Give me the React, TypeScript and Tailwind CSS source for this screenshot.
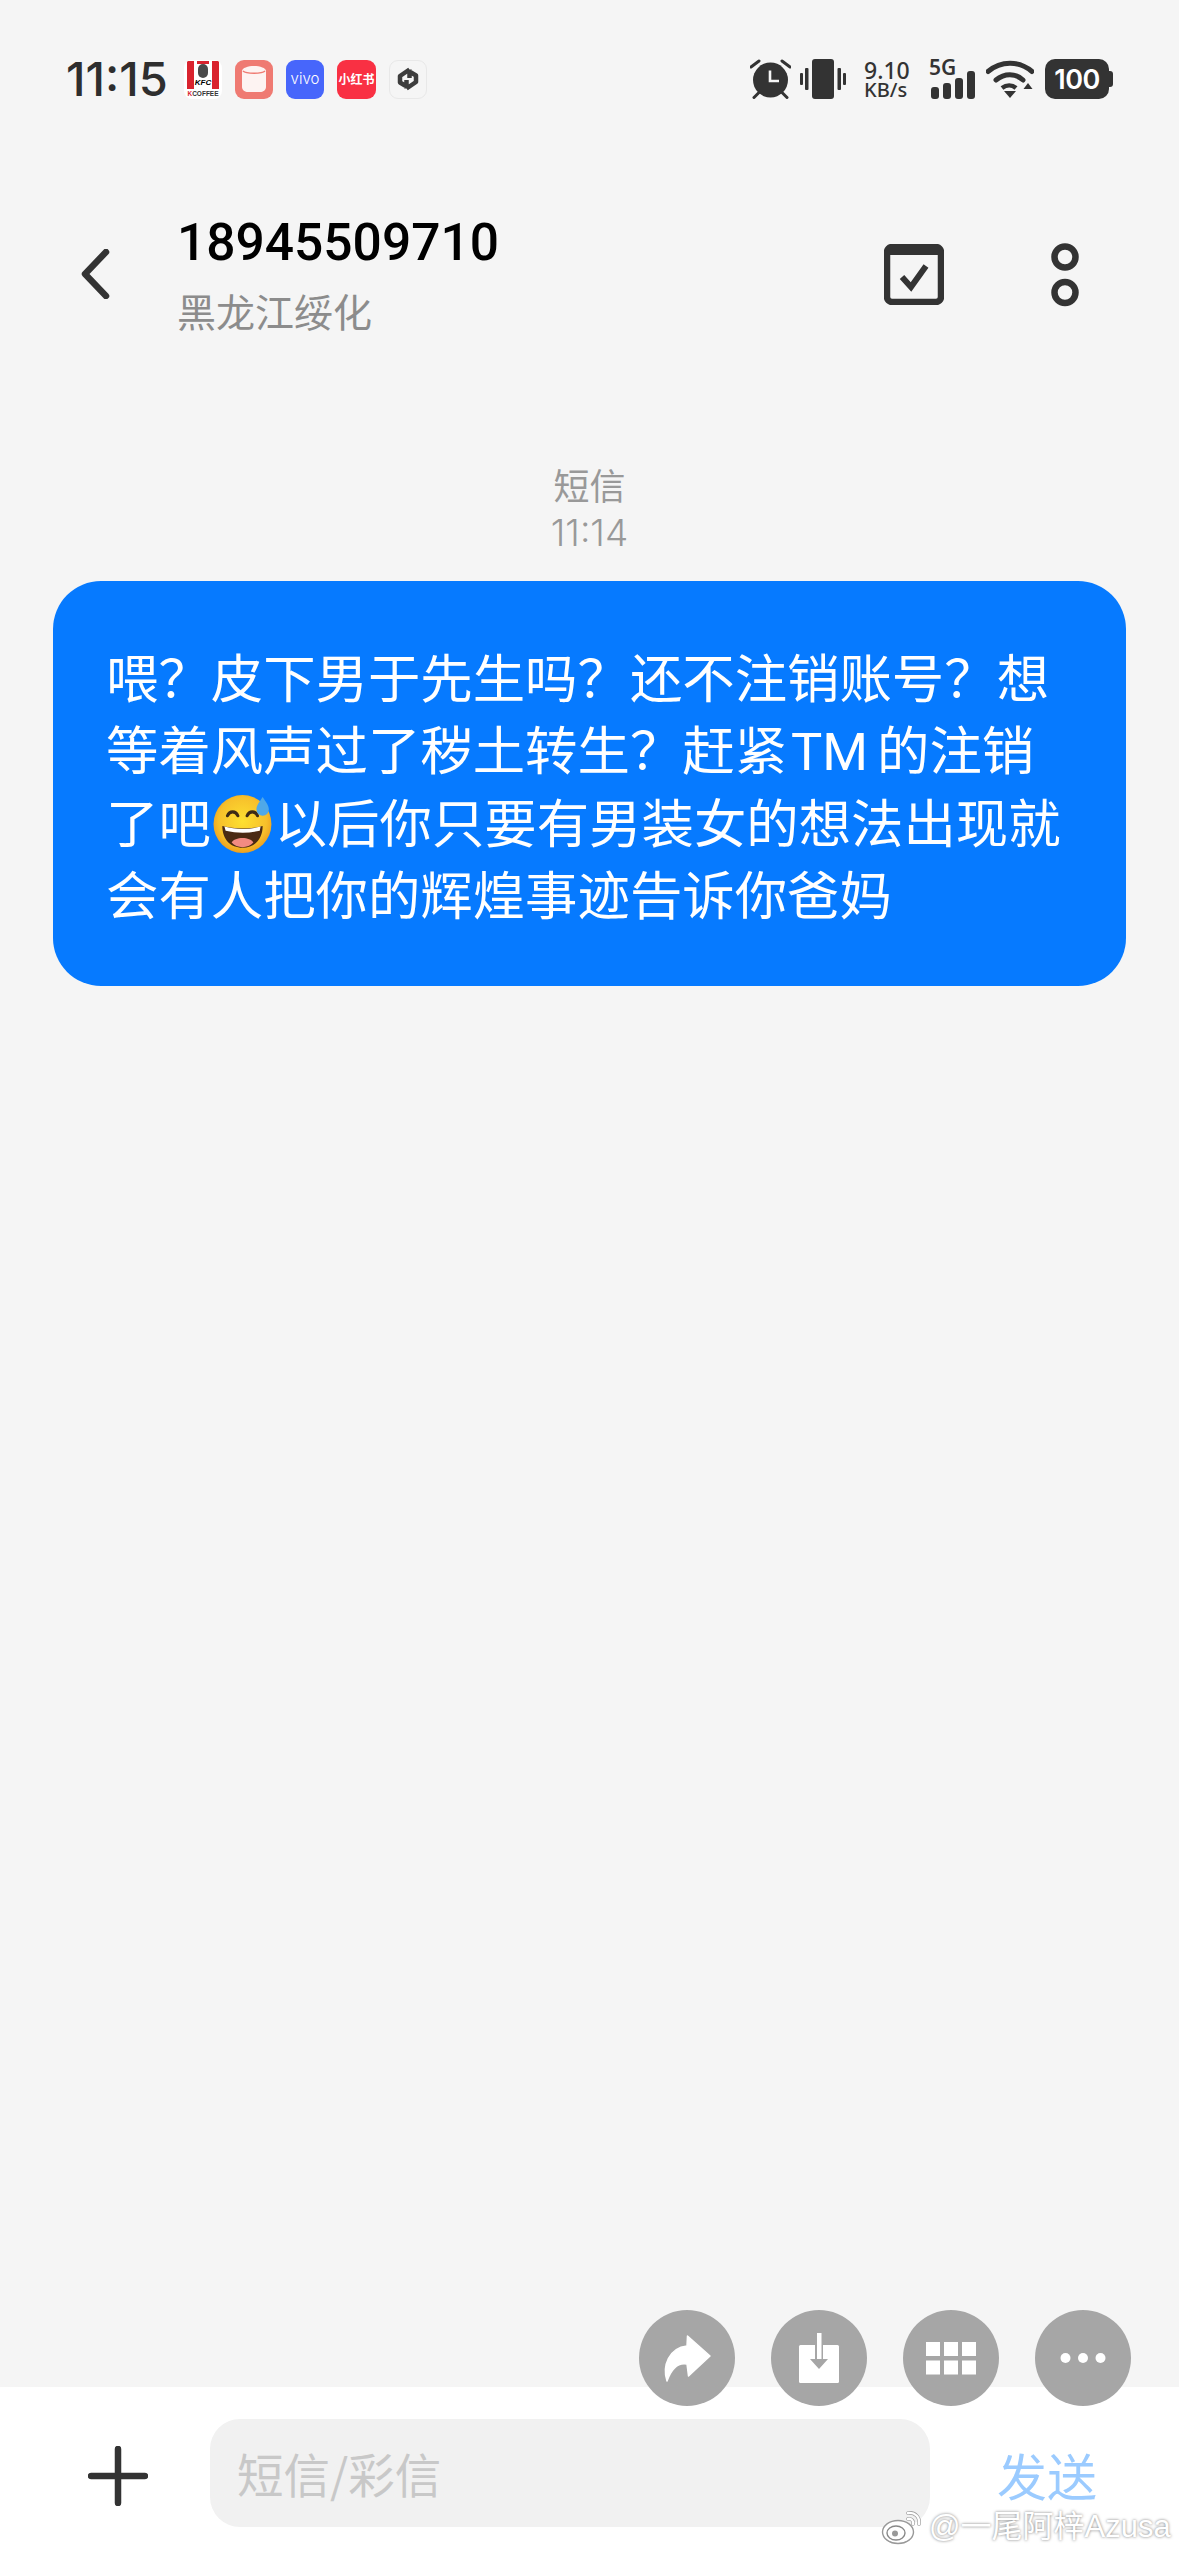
import React from "react";

const cjk = "font-['Noto_Sans_CJK_SC','Noto_Sans',sans-serif]";

function Emoji() {
  return (
    <svg viewBox="0 0 58 56" className="inline-block w-[60px] h-[58px] mx-[2px] -my-[10px] align-baseline">
      <defs>
        <radialGradient id="fc" cx="50%" cy="45%" r="55%">
          <stop offset="0%" stopColor="#fde030" />
          <stop offset="75%" stopColor="#f7c02b" />
          <stop offset="100%" stopColor="#ed9f1f" />
        </radialGradient>
      </defs>
      <circle cx="28.5" cy="28" r="28" fill="url(#fc)" />
      <path d="M14 20c2-5 8-5 10 0M33 20c2-5 8-5 10 0" fill="none" stroke="#3d2a16" strokeWidth="3" strokeLinecap="round" />
      <path d="M9 30c12 3 27 3 39 0c0 13-8 21-19.500 21S9 43 9 30z" fill="#4a2a14" />
      <path d="M11 30.500c11 3 24 3 35 0l-.8 4c-11 2.500-22 2.500-33 0z" fill="#fff" />
      <path d="M18 46c3-6 18-6 21 0c-5 6-16 6-21 0z" fill="#f28b82" />
      <path d="M48 2c3 5 6 8 6 12a6 6 0 0 1-12 0c0-4 3-7 6-12z" fill="#4fa8e8" />
    </svg>
  );
}

function Alarm() {
  return (
    <svg viewBox="0 0 41 40" className="w-[41px] h-[40px] text-[#333]" fill="currentColor">
      <circle cx="20.500" cy="21" r="17.500" />
      <path d="M20 11.500v10.500h9" fill="none" stroke="#f5f5f5" strokeWidth="2.600" />
      <path d="M1 8l8-6M40 8l-8-6M4 38.500l5-5M37 38.500l-5-5" fill="none" stroke="currentColor" strokeWidth="3" strokeLinecap="round" />
    </svg>
  );
}

function Vibrate() {
  return (
    <svg viewBox="0 0 46 40" className="w-[46px] h-[40px] ml-[9px] text-[#333]" fill="currentColor">
      <rect x="12" y="0" width="22" height="40" rx="3" />
      <rect x="0" y="14" width="3" height="12" rx="1" />
      <rect x="5" y="9" width="3.500" height="22" rx="1" />
      <rect x="37.500" y="9" width="3.500" height="22" rx="1" />
      <rect x="43" y="14" width="3" height="12" rx="1" />
    </svg>
  );
}

function Signal() {
  return (
    <svg viewBox="0 0 46 40" className="w-[46px] h-[40px] absolute left-0 top-0 text-[#333]" fill="currentColor">
      <rect x="2" y="28" width="8" height="12" rx="3" />
      <rect x="14" y="24" width="8" height="16" rx="3" />
      <rect x="26" y="19" width="8" height="21" rx="3" />
      <rect x="38" y="12" width="8" height="28" rx="3" />
    </svg>
  );
}

function Wifi() {
  return (
    <svg viewBox="0 0 48 40" className="w-[48px] h-[40px] ml-[11px] text-[#333]">
      <path d="M2 12.500c13-11 31-11 44 0" fill="none" stroke="currentColor" strokeWidth="5" strokeLinecap="round" />
      <path d="M10 21c8.500-7 19.500-7 27 0" fill="none" stroke="currentColor" strokeWidth="5" strokeLinecap="round" />
      <path d="M16 29c4.500-3.500 10-3.500 14 0" fill="none" stroke="currentColor" strokeWidth="4.500" />
      <path d="M18 32h12l-6 7z" fill="currentColor" />
      <path d="M37.500 30l4.500-6 4.500 6z" fill="currentColor" />
    </svg>
  );
}

function Battery() {
  return (
    <div className="ml-[11px] flex items-center">
      <div className="w-[64px] h-[40px] rounded-[10px] bg-[#333] flex items-center justify-center text-white font-['Inter',sans-serif] font-semibold text-[27px] leading-none tracking-[-0.5px]">
        100
      </div>
      <div className="w-[4px] h-[16px] rounded-r-[3px] bg-[#333]" />
    </div>
  );
}

function KfcIcon() {
  return (
    <div className="w-[38px] h-[39px] rounded-[8px] bg-white overflow-hidden flex flex-col items-center shrink-0">
      <div className="relative w-[32px] h-[28px] mt-[1px] bg-white flex justify-between overflow-hidden">
        <div className="w-[7px] h-full bg-[#d9232e]" />
        <div className="flex flex-col items-center">
          <div className="w-[12px] h-[3px] bg-[#d9232e]" />
          <div className="w-[10px] h-[14px] rounded-[5px] bg-[#4a4a4a]" />
          <div className="text-[8px] leading-[9px] font-black italic text-black font-['Liberation_Sans',sans-serif]">KFC</div>
        </div>
        <div className="w-[7px] h-full bg-[#d9232e]" />
      </div>
      <div className="text-[6.500px] leading-[8px] font-bold text-[#333] whitespace-nowrap font-['Liberation_Sans',sans-serif] mt-[1px]">
        <span className="text-[#d9232e]">K</span>COFFEE
      </div>
    </div>
  );
}

function CupIcon() {
  return (
    <div className="w-[38px] h-[39px] rounded-[9px] bg-[#ef7a72] flex items-center justify-center shrink-0">
      <svg viewBox="0 0 26 28" className="w-[26px] h-[28px]">
        <path d="M1 6c0-3 6-5 12-5s12 2 12 5v16c0 3-3 5-6 5H7c-3 0-6-2-6-5z" fill="#fdf3f2" />
        <path d="M2 6c3 3 19 3 22 0" fill="none" stroke="#ef7a72" strokeWidth="1.600" />
      </svg>
    </div>
  );
}

function SyncIcon() {
  return (
    <div className="w-[38px] h-[39px] rounded-[9px] bg-[#f5f5f5] border border-[#e8e8e8] flex items-center justify-center shrink-0">
      <svg viewBox="0 0 22 24" className="w-[22px] h-[24px]">
        <path d="M12.500 2.500L3 9v6.500l5 3M9.500 21.500L19 15V8.500l-5-3M12.500 2.500V11M9.500 21.500V13" fill="none" stroke="#3d3d3d" strokeWidth="4.500" strokeLinejoin="round" />
      </svg>
    </div>
  );
}

function StatusBar() {
  return (
    <div className="mt-[59px] h-[40px] pl-[66px] pr-[66px] flex items-center justify-between">
      <div className="flex items-center">
        <div className="w-[118px] text-[#2e2e2e] text-[47px] leading-[40px] font-medium font-['Inter',sans-serif]">11:15</div>
        <div className="flex gap-[13px]">
          <KfcIcon />
          <CupIcon />
          <div className="w-[38px] h-[39px] rounded-[9px] bg-[#4766fb] flex items-center justify-center text-white text-[15px] font-['Inter',sans-serif] font-light shrink-0">vivo</div>
          <div className="w-[39px] h-[39px] rounded-[9px] bg-[#f93043] flex items-center justify-center text-white text-[12px] font-bold whitespace-nowrap shrink-0 font-['Noto_Sans_CJK_SC',sans-serif]">小红书</div>
          <SyncIcon />
        </div>
      </div>
      <div className="flex items-center text-[#333]">
        <Alarm />
        <Vibrate />
        <div className="ml-[18px] w-[47px] flex flex-col font-['Noto_Sans',sans-serif] font-medium whitespace-nowrap">
          <span className="text-[23px] leading-[22px]">9.10</span>
          <span className="text-[20px] leading-[18px]">KB/s</span>
        </div>
        <div className="ml-[18px] relative w-[46px] h-[40px]">
          <Signal />
          <span className="absolute left-0 -top-[3px] text-[21px] leading-[22px] font-semibold font-['Noto_Sans',sans-serif]">5G</span>
        </div>
        <Wifi />
        <Battery />
      </div>
    </div>
  );
}

function Header() {
  return (
    <div className="mt-[112px] flex items-start pl-[80px] pr-[100px]">
      <svg viewBox="0 0 30 50" className="w-[30px] h-[50px] mt-[38px] text-[#333]">
        <path d="M26 3L5 25l21 22" fill="none" stroke="currentColor" strokeWidth="6.500" strokeLinecap="round" strokeLinejoin="round" />
      </svg>
      <div className="ml-[67px] flex-1">
        <div className="text-[51.500px] leading-[62px] mt-[1px] font-medium text-black font-['Roboto',sans-serif]">18945509710</div>
        <div className={`${cjk} text-[39px] leading-[50px] mt-[11px] text-[#8c8c8c]`}>黑龙江绥化</div>
      </div>
      <div className="mt-[33px] flex items-start gap-[107px]">
        <svg viewBox="0 0 60 61" className="w-[60px] h-[61px] text-[#333]">
          <rect x="3" y="3" width="54" height="55" rx="5" fill="none" stroke="currentColor" strokeWidth="6.500" />
          <rect x="3" y="3" width="54" height="8" fill="currentColor" />
          <path d="M18 33l9 10 15-21" fill="none" stroke="currentColor" strokeWidth="6" />
        </svg>
        <svg viewBox="0 0 28 64" className="w-[28px] h-[64px] -mt-[1px] text-[#333]">
          <circle cx="14" cy="14" r="10.500" fill="none" stroke="currentColor" strokeWidth="6.500" />
          <circle cx="14" cy="49.500" r="10.500" fill="none" stroke="currentColor" strokeWidth="6.500" />
        </svg>
      </div>
    </div>
  );
}

function Bubble() {
  const cls = "whitespace-nowrap";
  return (
    <div className={`mx-[53px] mt-[25px] h-[405px] rounded-[48px] bg-[#067aff] pl-[53px] pt-[58px] text-white text-[52.400px] leading-[72.300px] ${cjk}`}>
      <div className={cls}>喂？皮下男于先生吗？还不注销账号？想</div>
      <div className={cls}>等着风声过了秽土转生？赶紧<span className="ml-[4px] mr-[9px] leading-[0px] font-['Roboto',sans-serif]">TM</span>的注销</div>
      <div className={cls}>了吧<Emoji />以后你只要有男装女的想法出现就</div>
      <div className={cls}>会有人把你的辉煌事迹告诉你爸妈</div>
    </div>
  );
}

function RoundBtn({ children }: { children: React.ReactNode }) {
  return <div className="w-[96px] h-[96px] rounded-full bg-[#a6a6a6] flex items-center justify-center">{children}</div>;
}

function Actions() {
  return (
    <div className="absolute right-[48px] -top-[77px] flex gap-[36px]">
      <RoundBtn>
        <svg viewBox="0 0 96 96" className="w-[96px] h-[96px]">
          <path d="M48.500 26L71 46 49.500 66 48 54C38 52 32 60 28 71 23 56 30 38 48 36z" fill="#fff" strokeLinejoin="round" stroke="#fff" strokeWidth="1.500" />
        </svg>
      </RoundBtn>
      <RoundBtn>
        <svg viewBox="0 0 96 96" className="w-[96px] h-[96px]">
          <rect x="28" y="35" width="40" height="38" rx="1.500" fill="#fff" />
          <rect x="46" y="23" width="4.500" height="14" fill="#fff" />
          <path d="M44 35h8v14h5l-9 10-9-10h5z" fill="#a6a6a6" />
          <rect x="46" y="35" width="4.500" height="14" fill="#fff" />
        </svg>
      </RoundBtn>
      <RoundBtn>
        <svg viewBox="0 0 96 96" className="w-[96px] h-[96px]" fill="#fff">
          <rect x="23" y="32" width="14" height="14" />
          <rect x="41" y="32" width="14" height="14" />
          <rect x="59" y="32" width="14" height="14" />
          <rect x="23" y="50.500" width="14" height="14" />
          <rect x="41" y="50.500" width="14" height="14" />
          <rect x="59" y="50.500" width="14" height="14" />
        </svg>
      </RoundBtn>
      <RoundBtn>
        <svg viewBox="0 0 96 96" className="w-[96px] h-[96px]" fill="#fff">
          <circle cx="30.500" cy="48" r="5" />
          <circle cx="48" cy="48" r="5" />
          <circle cx="65.500" cy="48" r="5" />
        </svg>
      </RoundBtn>
    </div>
  );
}

function Watermark() {
  return (
    <div className="absolute left-[881px] top-[122px] flex items-center text-white">
      <svg viewBox="0 0 42 36" className="w-[42px] h-[36px]">
        <ellipse cx="17" cy="23" rx="15.500" ry="11.500" fill="#fff" stroke="#999" strokeWidth="1.400" />
        <ellipse cx="15" cy="24" rx="9" ry="7" fill="#fff" stroke="#888" strokeWidth="1.400" />
        <circle cx="14" cy="24.500" r="3" fill="#999" />
        <path d="M27 4c7-1 12 4 11 11M27 10c3-1 6 2 5 5" fill="none" stroke="#999" strokeWidth="3.600" strokeLinecap="round" />
        <path d="M27 4c7-1 12 4 11 11M27 10c3-1 6 2 5 5" fill="none" stroke="#fff" strokeWidth="2.400" strokeLinecap="round" />
      </svg>
      <span className="ml-[6px] text-[31px] leading-[36px] whitespace-nowrap font-['Liberation_Sans','Noto_Sans_CJK_SC',sans-serif] [text-shadow:0_0_3px_#777]">@一尾阿梓Azusa</span>
    </div>
  );
}

function BottomBar() {
  return (
    <div className="relative h-[169px] bg-white flex items-start">
      <Actions />
      <svg viewBox="0 0 60 60" className="w-[60px] h-[60px] ml-[88px] mt-[59px] text-[#333]">
        <path d="M30 3v54M3 30h54" stroke="currentColor" strokeWidth="6.500" strokeLinecap="round" />
      </svg>
      <div className="ml-[62px] mt-[32px] w-[720px] h-[108px] rounded-[30px] bg-[#f1f1f1] pl-[27px] flex items-center">
        <span className={`${cjk} text-[46.500px] leading-none text-[#c8c8c8]`}>短信/彩信</span>
      </div>
      <div className={`ml-[67px] mt-[59px] ${cjk} text-[50px] leading-[56px] text-[#9bcbff]`}>发送</div>
      <Watermark />
    </div>
  );
}

export default function App() {
  return (
    <div className="w-[1179px] h-[2556px] bg-[#f5f5f5] flex flex-col overflow-hidden relative">
      <StatusBar />
      <Header />
      <div className="flex-1">
        <div className={`mt-[126px] text-center text-[#999] text-[36px] leading-[46px] ${cjk}`}>短信</div>
        <div className="mt-[3px] text-center text-[#999] text-[37px] leading-[46px] font-['Inter',sans-serif] font-light">11:14</div>
        <Bubble />
      </div>
      <BottomBar />
    </div>
  );
}
